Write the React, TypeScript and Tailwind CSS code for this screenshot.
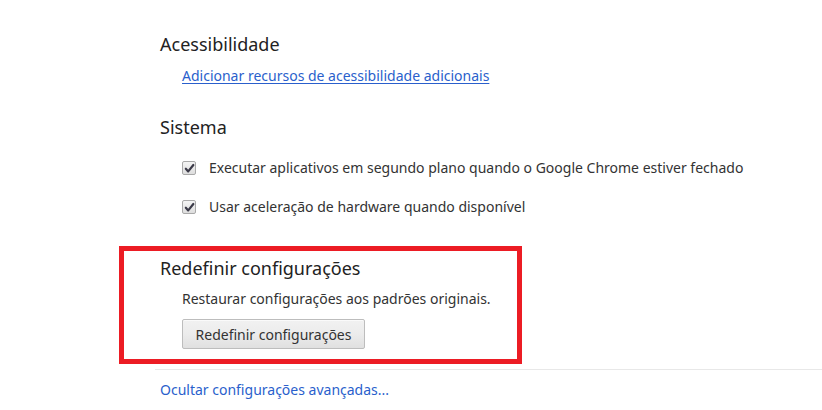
const font = { fontFamily: '"Noto Sans", "Open Sans", sans-serif' };

function Check({ label }: { label: string }) {
  return (
    <label className="flex h-6 items-center">
      <span className="flex h-[14px] w-[14px] items-center justify-center rounded-[2px] border border-[#a9a9a9] bg-gradient-to-b from-[#f4f4f4] to-[#dedede]">
        <svg viewBox="0 0 12 12" className="h-[11px] w-[11px]">
          <path d="M2 6.3 L4.6 9.2 L10.2 2.2" fill="none" stroke="#3b3a48" strokeWidth="2.4" strokeLinecap="round" strokeLinejoin="round" />
        </svg>
      </span>
      <span className="ml-[13px] text-[14px] leading-6 text-[#333]">{label}</span>
    </label>
  );
}

export default function App() {
  return (
    <div className="h-[410px] w-[822px] overflow-hidden bg-white pl-[160px] pt-[32px]" style={font}>
      {/* Acessibilidade */}
      <div className="text-[18px] leading-6 text-[#222]">Acessibilidade</div>
      <div className="mt-[10px] pl-[22px] text-[14px] leading-5">
        <a href="#" className="text-[#2a5fcc] underline underline-offset-2">
          Adicionar recursos de acessibilidade adicionais
        </a>
      </div>

      {/* Sistema */}
      <div className="mt-[29px] text-[18px] leading-6 text-[#222]">Sistema</div>
      <div className="mt-[17px] flex flex-col gap-[15px] pl-[22px]">
        <Check label="Executar aplicativos em segundo plano quando o Google Chrome estiver fechado" />
        <Check label="Usar aceleração de hardware quando disponível" />
      </div>

      {/* Redefinir configurações */}
      <div className="relative mt-[37px]">
        <div className="text-[18px] leading-6 text-[#222]">Redefinir configurações</div>
        <div className="mt-[9px] pl-[22px] text-[14px] leading-5 text-[#333]">
          Restaurar configurações aos padrões originais.
        </div>
        <div className="mt-[10px] pl-[22px]">
          <button className="flex h-[30px] w-[183px] items-center justify-center rounded-[2px] border border-[#bdbdbd] bg-gradient-to-b from-[#f1f1f1] via-[#ececec] to-[#e0e0e0] text-[14px] text-[#333] shadow-[inset_0_1px_0_#fafafa]">
            Redefinir configurações
          </button>
        </div>
        <div className="pointer-events-none absolute left-[-41px] top-[-10px] h-[118px] w-[403px] border-[5px] border-[#ec1c24]" />
      </div>

      <div className="mt-[20px] h-px bg-[#e8e8e8] -ml-[5px]" />
      <div className="mt-[10px] text-[14px] leading-5">
        <a href="#" className="text-[#2a5fcc]">Ocultar configurações avançadas...</a>
      </div>
    </div>
  );
}
